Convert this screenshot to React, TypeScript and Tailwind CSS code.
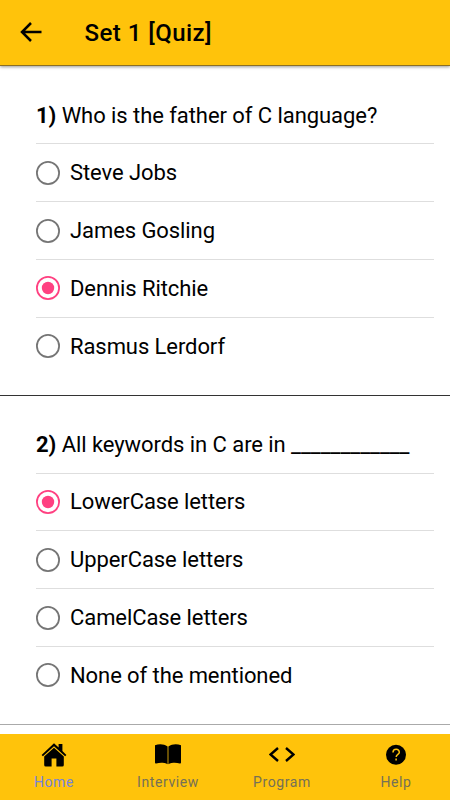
import React from "react";

const questions = [
  {
    title: "Who is the father of C language?",
    options: ["Steve Jobs", "James Gosling", "Dennis Ritchie", "Rasmus Lerdorf"],
    selected: 2,
    border: "border-[#333]",
  },
  {
    title: "All keywords in C are in ____________",
    options: ["LowerCase letters", "UpperCase letters", "CamelCase letters", "None of the mentioned"],
    selected: 0,
    border: "border-[#aaa]",
  },
];

const Radio = ({ checked }: { checked: boolean }) => (
  <svg className="size-6 shrink-0" viewBox="0 0 24 24" fill="none">
    <circle cx="12" cy="12" r="11.1" stroke={checked ? "#ff4081" : "#757575"} strokeWidth="1.800" />
    {checked && <circle cx="12" cy="12" r="6.200" fill="#ff4081" />}
  </svg>
);

const tabs = [
  {
    label: "Home",
    color: "text-[#7484dc]",
    icon: (
      <>
        <path d="M13 1.200.6 12.900 1.900 14.200 13 4.200l11.100 10L25.400 12.900l-4-3.800V2h-3.800v3.500z" />
        <path d="M13 5.700 3.200 14.500V23q0 1.500 1.500 1.500h5.900v-8h4.800v8h5.900q1.500 0 1.500-1.500v-8.500z" />
      </>
    ),
  },
  {
    label: "Interview",
    color: "text-[#757057]",
    icon: <path d="M0 3.200C4 1.600 9 1.800 12.600 4.400V22.300C9.500 20.500 5 20.500 1.200 21.500Q0 21.800 0 20.500zM26 3.200C22 1.600 17 1.800 13.400 4.400V22.300c3.100-1.800 7.600-1.800 11.400-.8q1.200.3 1.200-1z" />,
  },
  {
    label: "Program",
    color: "text-[#757057]",
    icon: <path d="M9 6 1.500 12.500 9 19M17 6l7.500 6.500L17 19" fill="none" stroke="currentColor" strokeWidth="2.400" />,
  },
  {
    label: "Help",
    color: "text-[#757057]",
    icon: (
      <>
        <circle cx="13" cy="12.800" r="10" />
        <path d="M10 10.500c0-4.300 6.500-4.300 6.300 0-.1 2-3.100 1.900-3.100 4.500M13.100 16.400v2" fill="none" stroke="#ffc30b" strokeWidth="1.500" />
      </>
    ),
  },
];

const App = () => {
  return (
    <div className="w-[450px] h-[800px] overflow-hidden bg-white flex flex-col text-black font-[Roboto,sans-serif]">
      <header className="h-[66px] shrink-0 bg-[#ffc30b] border-b border-[#8b6f24] flex items-center pl-5 shadow-[0_1px_3px_rgba(0,0,0,0.4)]">
        <svg className="size-[22px]" viewBox="0 0 22 22" fill="none" stroke="currentColor" strokeWidth="2.500">
          <path d="M21.500 10H2.500M11 1 2 10l9 9" />
        </svg>
        <h1 className="ml-[42.5px] text-[24px] font-medium tracking-[0.46px]">Set 1 [Quiz]</h1>
      </header>
      <main className="flex-1 min-h-0 overflow-hidden pt-[0.4px]">
        {questions.map((question, i) => (
          <section key={question.title} className={`h-[329.2px] border-b pl-9 pr-4 pt-[20px] ${question.border}`}>
            <h2 className="h-[57px] pt-[0.6px] text-[22px] leading-[57px] tracking-[-0.06px] whitespace-nowrap">
              <b>{i + 1})</b> {question.title}
            </h2>
            {question.options.map((option, j) => (
              <div key={option} className="h-[57.8px] border-t border-[#dedede] flex items-center gap-[10px] text-[22px] tracking-[-0.08px]">
                <Radio checked={j === question.selected} />
                {option}
              </div>
            ))}
          </section>
        ))}
      </main>
      <nav className="h-[66px] shrink-0 bg-[#ffc30b] grid grid-cols-[repeat(4,114px)] -ml-[3px] w-[456px]">
        {tabs.map((tab) => (
          <div key={tab.label} className="flex flex-col items-center pt-2">
            <svg className="size-[26px]" viewBox="0 0 26 26" fill="currentColor">{tab.icon}</svg>
            <span className={`mt-1 text-[14px] leading-5 tracking-[0.6px] ${tab.color}`}>{tab.label}</span>
          </div>
        ))}
      </nav>
    </div>
  );
};

export default App;
